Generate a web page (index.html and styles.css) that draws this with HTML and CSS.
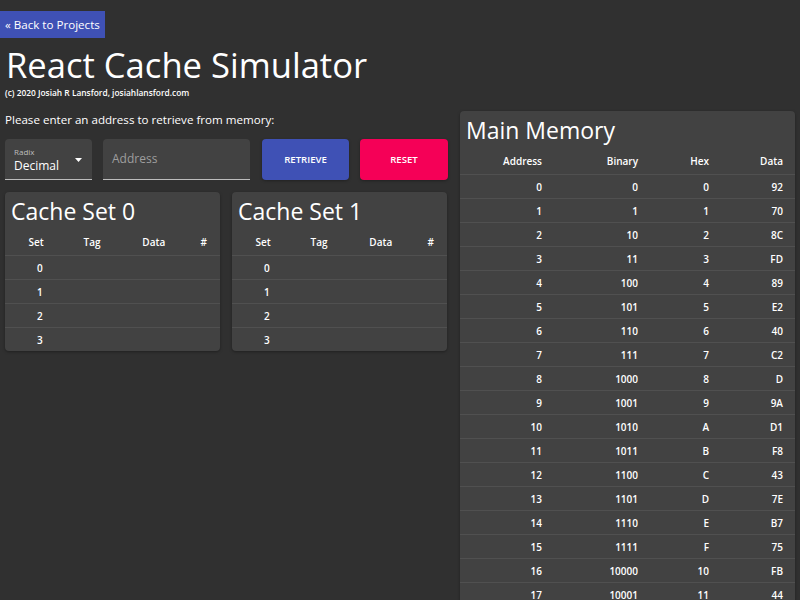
FILE: index.html
```html
<!DOCTYPE html>
<html>
<head>
<meta charset="utf-8">
<link rel="stylesheet" href="styles.css">
</head>
<body>
<div class="top">
  <a class="back">« Back to Projects</a>
  <h1 class="title">React Cache Simulator</h1>
  <div class="copy">(c) 2020 Josiah R Lansford, josiahlansford.com</div>
</div>
<div class="main">
  <div class="left">
    <div class="prompt">Please enter an address to retrieve from memory:</div>
    <div class="form">
      <div class="field select">
        <div class="label">Radix</div>
        <div class="value">Decimal</div>
        <svg class="caret" width="7" height="4" viewBox="0 0 7 4"><path d="M0 0 L7 0 L3.5 4 Z" fill="#fff"/></svg>
      </div>
      <div class="field input"><span class="ph">Address</span></div>
      <div class="btn blue">RETRIEVE</div>
      <div class="btn pink">RESET</div>
    </div>
    <div class="sets">
      <div class="card cache">
        <h2>Cache Set 0</h2>
        <table>
          <tr class="head"><th>Set</th><th>Tag</th><th>Data</th><th>#</th></tr>
          <tr><td>0</td><td></td><td></td><td></td></tr>
          <tr><td>1</td><td></td><td></td><td></td></tr>
          <tr><td>2</td><td></td><td></td><td></td></tr>
          <tr><td>3</td><td></td><td></td><td></td></tr>
        </table>
      </div>
      <div class="card cache">
        <h2>Cache Set 1</h2>
        <table>
          <tr class="head"><th>Set</th><th>Tag</th><th>Data</th><th>#</th></tr>
          <tr><td>0</td><td></td><td></td><td></td></tr>
          <tr><td>1</td><td></td><td></td><td></td></tr>
          <tr><td>2</td><td></td><td></td><td></td></tr>
          <tr><td>3</td><td></td><td></td><td></td></tr>
        </table>
      </div>
    </div>
  </div>
  <div class="card memory">
    <h2>Main Memory</h2>
    <table>
      <tr class="head"><th>Address</th><th>Binary</th><th>Hex</th><th>Data</th></tr>
      <tr><td>0</td><td>0</td><td>0</td><td>92</td></tr>
      <tr><td>1</td><td>1</td><td>1</td><td>70</td></tr>
      <tr><td>2</td><td>10</td><td>2</td><td>8C</td></tr>
      <tr><td>3</td><td>11</td><td>3</td><td>FD</td></tr>
      <tr><td>4</td><td>100</td><td>4</td><td>89</td></tr>
      <tr><td>5</td><td>101</td><td>5</td><td>E2</td></tr>
      <tr><td>6</td><td>110</td><td>6</td><td>40</td></tr>
      <tr><td>7</td><td>111</td><td>7</td><td>C2</td></tr>
      <tr><td>8</td><td>1000</td><td>8</td><td>D</td></tr>
      <tr><td>9</td><td>1001</td><td>9</td><td>9A</td></tr>
      <tr><td>10</td><td>1010</td><td>A</td><td>D1</td></tr>
      <tr><td>11</td><td>1011</td><td>B</td><td>F8</td></tr>
      <tr><td>12</td><td>1100</td><td>C</td><td>43</td></tr>
      <tr><td>13</td><td>1101</td><td>D</td><td>7E</td></tr>
      <tr><td>14</td><td>1110</td><td>E</td><td>B7</td></tr>
      <tr><td>15</td><td>1111</td><td>F</td><td>75</td></tr>
      <tr><td>16</td><td>10000</td><td>10</td><td>FB</td></tr>
      <tr><td>17</td><td>10001</td><td>11</td><td>44</td></tr>
    </table>
  </div>
</div>
</body>
</html>
```

FILE: styles.css
```css
html, body {
  margin: 0;
  padding: 0;
  background: #303030;
  color: #fff;
  font-family: "Open Sans", "Liberation Sans", sans-serif;
  overflow: hidden;
  height: 600px;
}
.top {
  padding-top: 11px;
}
.back {
  display: inline-block;
  background: #3f51b5;
  color: #fff;
  font-size: 11.6px;
  line-height: 27px;
  padding: 0 5px 0 5px;
}
.title {
  margin: 4px 0 0 6px;
  font-size: 34.6px;
  font-weight: 400;
  line-height: 46px;
}
.copy {
  font-size: 8.4px;
  font-weight: 600;
  margin: -1px 0 0 5px;
  line-height: 12px;
}
.main {
  display: grid;
  grid-template-columns: 443px 335px;
  column-gap: 12px;
  padding-left: 5px;
  margin-top: 12px;
}
.prompt {
  font-size: 11.6px;
  line-height: 18px;
}
.form {
  display: grid;
  grid-template-columns: 87px 147px 88px 88px;
  column-gap: 11px;
  margin-top: 10px;
  height: 41px;
}
.field {
  background: #424242;
  border-radius: 4px 4px 0 0;
  border-bottom: 1px solid #bdbdbd;
  position: relative;
  box-sizing: border-box;
}
.select .label {
  font-size: 8px;
  color: #bdbdbd;
  margin: 8px 0 0 9px;
  line-height: 10px;
}
.select .value {
  font-size: 12px;
  margin: 1px 0 0 9px;
  line-height: 16px;
}
.caret {
  position: absolute;
  right: 10px;
  top: 19px;
}
.input .ph {
  display: block;
  font-size: 12px;
  color: #9e9e9e;
  margin: 12px 0 0 9px;
  line-height: 16px;
}
.btn {
  border-radius: 4px;
  font-size: 9.6px;
  font-weight: 600;
  display: flex;
  align-items: center;
  justify-content: center;
  box-shadow: 0 1px 3px rgba(0,0,0,0.3);
}
.blue { background: #3f51b5; margin-left: 1px; }
.pink { background: #f50057; }
.sets {
  display: grid;
  grid-template-columns: 215px 215px;
  column-gap: 12px;
  margin-top: 12px;
}
.card {
  background: #424242;
  border-radius: 4px;
  box-shadow: 0 1px 3px rgba(0,0,0,0.35);
}
.card h2 {
  margin: 0;
  font-weight: 400;
  font-size: 23px;
  line-height: 32px;
  padding: 3px 0 2px 6px;
}
table {
  border-collapse: collapse;
  width: 100%;
  font-size: 10px;
  font-weight: 600;
}
th, td {
  text-align: right;
  padding: 0;
  height: 23px;
  border-bottom: 1px solid #505050;
}
tr.head th {
  height: 26px;
  font-weight: 600;
}
tr:last-child td { border-bottom: none; }
.cache th:nth-child(1), .cache td:nth-child(1) { width: 38px; }
.cache th:nth-child(2), .cache td:nth-child(2) { width: 57px; }
.cache th:nth-child(3), .cache td:nth-child(3) { width: 65px; }
.cache th:nth-child(4), .cache td:nth-child(4) { width: 42px; padding-right: 13px; }
.cache td:nth-child(1) { padding-right: 1px; }
.memory {
  height: 620px;
}
.memory th:nth-child(1), .memory td:nth-child(1) { width: 82px; }
.memory th:nth-child(2), .memory td:nth-child(2) { width: 96px; }
.memory th:nth-child(3), .memory td:nth-child(3) { width: 71px; }
.memory th:nth-child(4), .memory td:nth-child(4) { width: 74px; padding-right: 12px; }
```
